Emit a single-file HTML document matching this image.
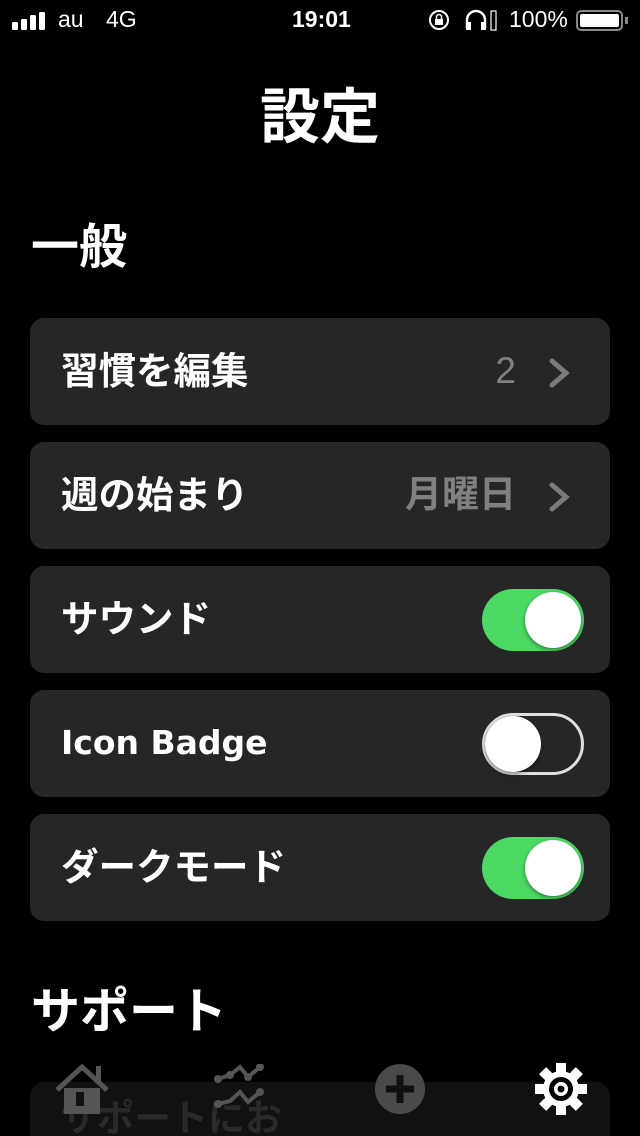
<!DOCTYPE html>
<html><head><meta charset="utf-8"><style>
*{margin:0;padding:0;box-sizing:border-box}
html,body{width:640px;height:1136px;overflow:hidden}
body{background:#000;color:#fff;font-family:"Liberation Sans","Noto Sans CJK JP",sans-serif;position:relative}
.abs{position:absolute}
.sb{font-size:23px;top:6px}
.card{position:absolute;left:30px;width:580px;height:107px;background:#262626;border-radius:14px}
.lbl{position:absolute;left:31px;top:28px;font-size:37.5px;font-weight:bold;line-height:50px}
.val{position:absolute;right:94px;top:28px;font-size:37px;line-height:50px;color:#808080;font-weight:bold}
.chev{position:absolute;right:38px;top:40px}
.tg{position:absolute;left:452px;top:23px;width:102px;height:62px;border-radius:31px}
.tg.on{background:#4cd964}
.tg.off{background:#262626;border:3px solid #e0e0e0}
.knob{position:absolute;top:3px;width:56px;height:56px;border-radius:50%;background:#fff;box-shadow:0 2px 4px rgba(0,0,0,.4)}
.on .knob{left:43px}
.off .knob{left:0;top:0}
</style></head><body>
<div class="abs" style="left:12px;top:12px;">
<svg width="34" height="18"><rect x="0" y="10" width="6" height="8" rx="1.5" fill="#fff"/><rect x="9" y="7" width="6" height="11" rx="1.5" fill="#fff"/><rect x="18" y="3" width="6" height="15" rx="1.5" fill="#fff"/><rect x="27" y="0" width="6" height="18" rx="1.5" fill="#fff"/></svg></div>
<div class="abs sb" style="left:58px">au</div>
<div class="abs sb" style="left:106px">4G</div>
<div class="abs sb" style="left:292px;font-weight:bold">19:01</div>
<svg class="abs" style="left:428px;top:9px" width="24" height="22"><circle cx="11" cy="11" r="9" fill="none" stroke="#fff" stroke-width="2"/><rect x="7" y="10" width="8" height="6" fill="#fff"/><path d="M8.5 10V8a2.5 2.5 0 0 1 5 0v2" stroke="#fff" stroke-width="1.5" fill="none"/></svg>
<svg class="abs" style="left:464px;top:8px" width="40" height="24"><path d="M3 20V12a9 9 0 0 1 18 0v8" stroke="#fff" stroke-width="2.5" fill="none"/><rect x="2" y="14" width="5" height="8" fill="#fff"/><rect x="17" y="14" width="5" height="8" fill="#fff"/><rect x="27" y="3" width="5" height="19" fill="none" stroke="#fff" stroke-width="1.2"/></svg>
<div class="abs sb" style="left:509px">100%</div>
<div class="abs" style="left:576px;top:10px;width:47px;height:21px;border:2px solid #888;border-radius:5px;padding:2px"><div style="width:100%;height:100%;background:#fff;border-radius:2px"></div></div>
<div class="abs" style="left:625px;top:17px;width:3px;height:7px;background:#888"></div>

<div class="abs" style="left:0;width:640px;top:82px;text-align:center;font-size:60px;font-weight:bold;line-height:72px">設定</div>
<div class="abs" style="left:31px;top:218px;font-size:48px;font-weight:bold;line-height:60px">一般</div>

<div class="card" style="top:318px"><div class="lbl">習慣を編集</div><div class="val" style="font-weight:normal">2</div>
<svg class="chev" width="24" height="30"><path d="M4 3l14 12L4 27" stroke="#7a7a7a" stroke-width="5" fill="none" stroke-linecap="round"/></svg></div>
<div class="card" style="top:442px"><div class="lbl">週の始まり</div><div class="val">月曜日</div>
<svg class="chev" width="24" height="30"><path d="M4 3l14 12L4 27" stroke="#7a7a7a" stroke-width="5" fill="none" stroke-linecap="round"/></svg></div>
<div class="card" style="top:566px"><div class="lbl">サウンド</div><div class="tg on"><div class="knob"></div></div></div>
<div class="card" style="top:690px"><div class="lbl" style="font-family:'DejaVu Sans',sans-serif;font-size:33px">Icon Badge</div><div class="tg off"><div class="knob"></div></div></div>
<div class="card" style="top:814px"><div class="lbl">ダークモード</div><div class="tg on"><div class="knob"></div></div></div>

<div class="abs" style="left:31px;top:982px;font-size:49px;font-weight:bold;line-height:60px">サポート</div>
<div class="abs" style="left:30px;top:1082px;width:580px;height:54px;background:#111;border-radius:14px 14px 0 0"></div>
<div class="abs" style="left:60px;top:1088px;font-size:37px;color:#2a2a2a;font-weight:bold">サポートにお</div>

<svg class="abs" style="left:52px;top:1062px" width="60" height="52"><path d="M5 28L30 5l25 23" stroke="#555" stroke-width="5" fill="none"/><rect x="44" y="4" width="5" height="16" fill="#555"/><path d="M12 26h36v26H12z" fill="#555"/><rect x="24" y="30" width="8" height="14" fill="#111"/></svg>
<svg class="abs" style="left:212px;top:1064px" width="60" height="50"><path d="M6 15l12-4 10-8 8 10 12-10" stroke="#555" stroke-width="4" fill="none"/><path d="M6 40l12-3 10-9 8 10 12-10" stroke="#555" stroke-width="4" fill="none"/><g fill="#555"><circle cx="6" cy="15" r="4"/><circle cx="18" cy="11" r="4"/><circle cx="36" cy="13" r="4"/><circle cx="48" cy="3" r="4"/><circle cx="6" cy="40" r="4"/><circle cx="48" cy="28" r="4"/></g></svg>
<svg class="abs" style="left:374px;top:1064px" width="52" height="50"><ellipse cx="26" cy="25" rx="25" ry="25" fill="#4a4a4a"/><path d="M26 11v28M12 25h28" stroke="#111" stroke-width="7"/></svg>
<svg class="abs" style="left:534px;top:1062px" width="54" height="54" viewBox="0 0 54 54"><g fill="#fff"><circle cx="27" cy="27" r="18"/><g transform="translate(27 27)"><rect x="-5" y="-26" width="10" height="12"/><rect x="-5" y="14" width="10" height="12"/><rect x="-26" y="-5" width="12" height="10"/><rect x="14" y="-5" width="12" height="10"/><g transform="rotate(45)"><rect x="-5" y="-26" width="10" height="12"/><rect x="-5" y="14" width="10" height="12"/><rect x="-26" y="-5" width="12" height="10"/><rect x="14" y="-5" width="12" height="10"/></g></g></g><circle cx="27" cy="27" r="12" fill="#000"/><circle cx="27" cy="27" r="7" fill="#fff"/><circle cx="27" cy="27" r="3.5" fill="#000"/></svg>
</body></html>
